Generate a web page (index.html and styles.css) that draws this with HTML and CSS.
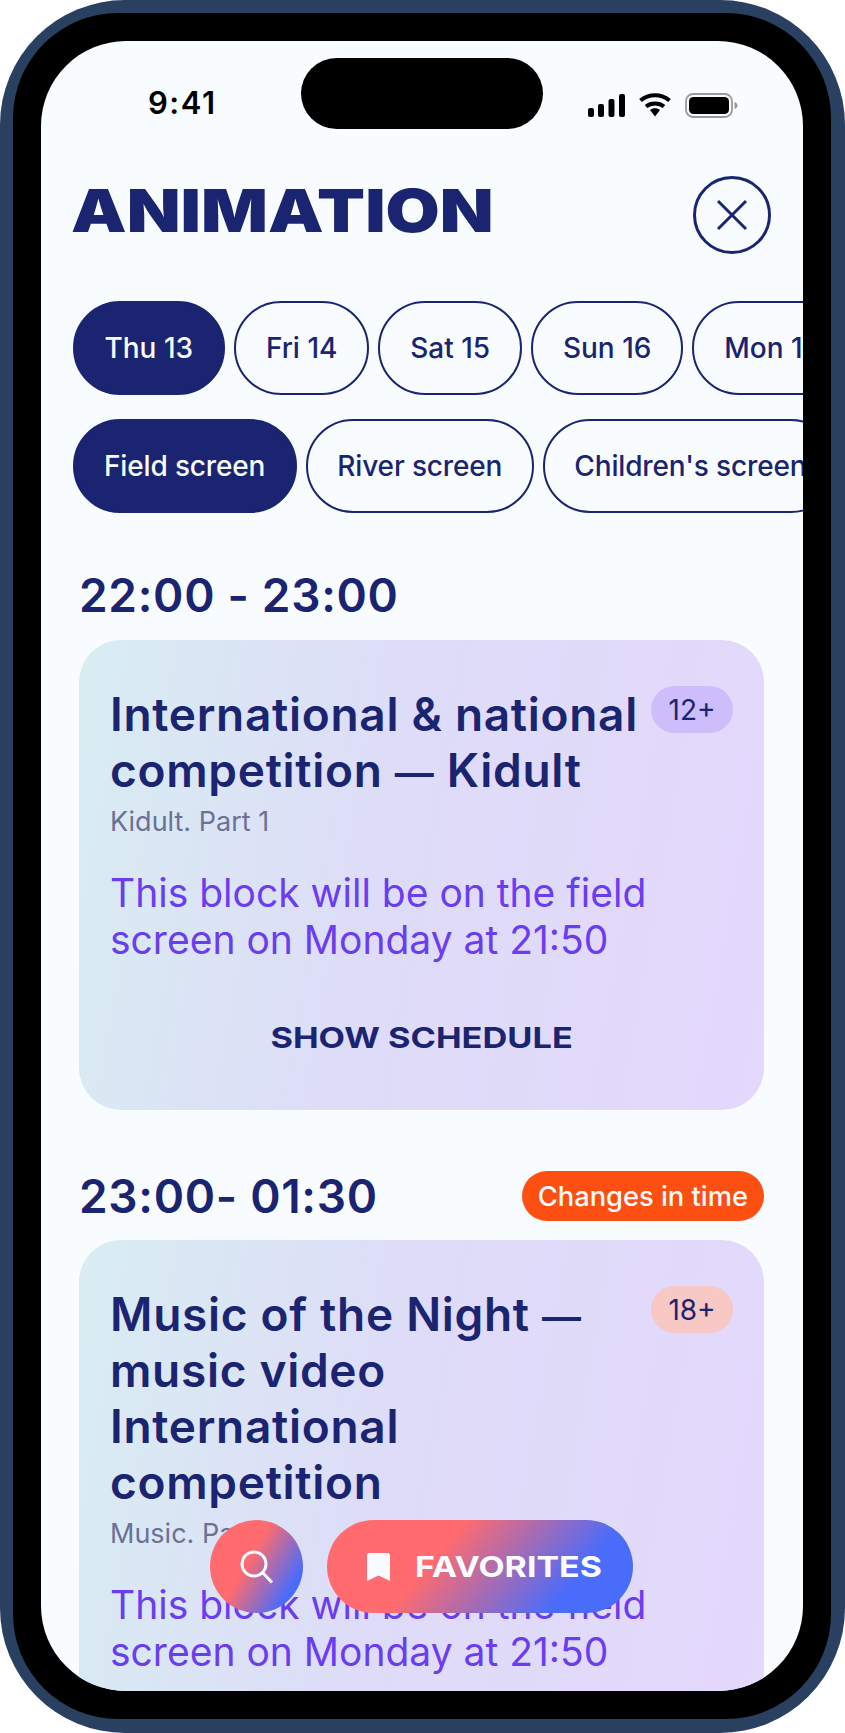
FILE: index.html
```html
<!DOCTYPE html>
<html lang="en">
<head>
    <meta charset="UTF-8">
    <meta name="viewport" content="width=device-width, initial-scale=1.0">
    <title>Animation schedule</title>
    <link rel="stylesheet" href="styles.css">
</head>
<body>

    <div class="phone">
        <div class="bezel">
            <div class="screen">

                <!-- Status bar -->
                <div class="status-bar">
                    <div class="status-time">9:41</div>
                    <div class="island"></div>
                    <div class="status-icons">
                        <svg width="37" height="23" viewBox="0 0 37 23" fill="#000">
                            <rect x="0" y="14" width="6" height="9" rx="2"/>
                            <rect x="10" y="10" width="6" height="13" rx="2"/>
                            <rect x="20.500" y="5" width="6" height="18" rx="2"/>
                            <rect x="31" y="0" width="6" height="23" rx="2"/>
                        </svg>
                        <svg width="32" height="24" viewBox="0 0 32 24" fill="none" stroke="#000" stroke-width="4">
                            <path d="M1.500 7.500C9.500 0.500 22.500 0.500 30.500 7.500"/>
                            <path d="M7 13.500C12 9.500 20 9.500 25 13.500"/>
                            <path d="M11 17L16 23.500L21 17C18 14.800 14 14.800 11 17Z" fill="#000" stroke="none"/>
                        </svg>
                        <svg width="53" height="25" viewBox="0 0 53 25">
                            <rect x="1" y="1" width="46" height="23" rx="7" fill="none" stroke="#9a9a9a" stroke-width="1.800"/>
                            <rect x="4" y="4" width="40" height="17" rx="4.500" fill="#000"/>
                            <path d="M49.500 9C51.500 9.500 52.500 11 52.500 12.500C52.500 14 51.500 15.500 49.500 16Z" fill="#9a9a9a"/>
                        </svg>
                    </div>
                </div>

                <!-- Header -->
                <div class="page-head">
                    <h1 class="page-title"><span>ANIMATION</span></h1>
                    <button class="close-button">
                        <svg width="32" height="32" viewBox="0 0 32 32" fill="none" stroke="#1b2470" stroke-width="3">
                            <path d="M2 2L30 30M30 2L2 30"/>
                        </svg>
                    </button>
                </div>

                <!-- Day filter -->
                <div class="pill-row">
                    <div class="pill active">Thu 13</div>
                    <div class="pill">Fri 14</div>
                    <div class="pill">Sat 15</div>
                    <div class="pill">Sun 16</div>
                    <div class="pill">Mon 17</div>
                </div>

                <!-- Screen filter -->
                <div class="pill-row second">
                    <div class="pill active">Field screen</div>
                    <div class="pill">River screen</div>
                    <div class="pill">Children's screen</div>
                </div>

                <!-- First block -->
                <div class="time-row first">
                    <h2 class="time">22:00 - 23:00</h2>
                </div>
                <div class="card">
                    <div class="card-top">
                        <div class="card-title">International &amp; national competition <span class="dash">—</span> Kidult</div>
                        <div class="age age-12">12+</div>
                    </div>
                    <div class="card-sub">Kidult. Part 1</div>
                    <div class="card-note">This block will be on the field screen on Monday at 21:50</div>
                    <div class="card-link"><span>SHOW SCHEDULE</span></div>
                </div>

                <!-- Second block -->
                <div class="time-row">
                    <h2 class="time">23:00- 01:30</h2>
                    <div class="change-badge">Changes in time</div>
                </div>
                <div class="card">
                    <div class="card-top">
                        <div class="card-title">Music of the Night <span class="dash">—</span> music video International competition</div>
                        <div class="age age-18">18+</div>
                    </div>
                    <div class="card-sub">Music. Part 1</div>
                    <div class="card-note">This block will be on the field screen on Monday at 21:50</div>
                </div>

                <!-- Floating buttons -->
                <div class="float-bar">
                    <button class="float-search">
                        <svg width="34" height="34" viewBox="0 0 34 34" fill="none" stroke="#f7fbff" stroke-width="3">
                            <circle cx="14" cy="14" r="12"/>
                            <path d="M22.500 22.500L32 32.500"/>
                        </svg>
                    </button>
                    <button class="float-fav">
                        <svg width="23" height="28" viewBox="0 0 23 28" fill="#f7fbff">
                            <path d="M2 0H21C22 0 23 1 23 2V28L11.500 22.500L0 28V2C0 1 1 0 2 0Z"/>
                        </svg>
                        <span>FAVORITES</span>
                    </button>
                </div>

            </div>
        </div>
    </div>

</body>
</html>
```

FILE: styles.css
```css
body {
    font-family: Inter, "Noto Sans", sans-serif;
    background-color: #fff;
    margin: 0;
}

.phone {
    width: 845px;
    height: 1733px;
    box-sizing: border-box;
    padding: 13px 14px 14px 13px;
    background-color: #2a4060;
    border-radius: 125px;
}

.bezel {
    height: 100%;
    box-sizing: border-box;
    padding: 28px;
    background-color: #000;
    border-radius: 105px;
}

.screen {
    position: relative;
    height: 100%;
    overflow: hidden;
    background-color: #f8fcff;
    border-radius: 85px;
}

.status-bar {
    display: flex;
    padding: 17px 65px 0 107px;
}

.status-time {
    width: 153px;
    padding-top: 27px;
    font-size: 31px;
    font-weight: 600;
    letter-spacing: 1.500px;
    line-height: 36px;
    color: #000;
}

.island {
    width: 242px;
    height: 71px;
    background-color: #000;
    border-radius: 36px;
}

.status-icons {
    display: flex;
    gap: 14px;
    align-items: center;
    height: 24px;
    margin-left: auto;
    padding-top: 35px;
}

.page-head {
    display: flex;
    justify-content: space-between;
    align-items: flex-start;
    margin-top: 47px;
    padding: 0 32px 0 30px;
}

.page-title {
    margin: 10px 0 0;
    font-size: 59px;
    font-weight: 900;
    line-height: 50px;
    color: #1b2470;
}

.page-title span {
    display: inline-block;
    transform: scaleX(1.187);
    transform-origin: left;
}

.close-button {
    display: flex;
    justify-content: center;
    align-items: center;
    width: 78px;
    height: 78px;
    padding: 0;
    background: none;
    border: 3px solid #1b2470;
    border-radius: 50%;
}

.pill-row {
    display: flex;
    gap: 8.800px;
    margin-top: 47px;
    padding-left: 31.500px;
    overflow: hidden;
}

.pill-row.second {
    gap: 9px;
    margin-top: 24px;
    letter-spacing: -0.150px;
}

.pill {
    display: flex;
    flex-shrink: 0;
    align-items: center;
    box-sizing: border-box;
    height: 94px;
    padding: 0 30px;
    font-size: 28px;
    font-weight: 500;
    color: #1b2470;
    border: 2px solid #1b2470;
    border-radius: 47px;
}

.pill-row.second .pill {
    padding: 0 29.500px;
}

.pill.active {
    background-color: #1b2470;
    color: #f8fcff;
}

.time-row {
    display: flex;
    justify-content: space-between;
    align-items: center;
    height: 50px;
    margin: 61px 39px 19px 38px;
}

.time-row.first {
    margin-top: 57px;
    margin-bottom: 20px;
}

.time {
    margin: 0;
    font-size: 46px;
    font-weight: 600;
    letter-spacing: 0.700px;
    color: #1b2470;
}

.change-badge {
    display: flex;
    align-items: center;
    height: 50px;
    padding: 0 16px;
    font-size: 27.300px;
    font-weight: 500;
    color: #f8fcff;
    background-color: #fe4f12;
    border-radius: 25px;
}

.card {
    box-sizing: border-box;
    margin: 0 39px 0 38px;
    padding: 46px 31px 54px 31px;
    background: linear-gradient(100deg, #d8edf2 0%, #dedcf8 45%, #e4d8fc 100%);
    border-radius: 42px;
}

.card-top {
    display: flex;
    align-items: flex-start;
    justify-content: space-between;
}

.card-title {
    flex: 1;
    font-size: 46px;
    font-weight: 600;
    letter-spacing: 0.700px;
    line-height: 56px;
    color: #1b2470;
}

.dash {
    font-size: 39px;
    line-height: 39px;
}

.age {
    flex-shrink: 0;
    display: flex;
    justify-content: center;
    align-items: center;
    width: 82px;
    height: 47px;
    font-size: 28px;
    color: #1b2470;
    border-radius: 24px;
}

.age-12 {
    background-color: #cdbdfb;
}

.age-18 {
    background-color: #f7c8c4;
}

.card-sub {
    margin-top: 6px;
    font-size: 27px;
    line-height: 36px;
    color: #6b7194;
}

.card-note {
    margin-top: 29px;
    font-size: 39px;
    line-height: 47px;
    color: #6b3df0;
}

.card-link {
    margin-top: 57px;
    font-size: 29px;
    font-weight: 700;
    line-height: 36px;
    text-align: center;
    color: #1b2470;
}

.card-link span {
    display: inline-block;
    transform: scaleX(1.185);
}

.float-bar {
    position: absolute;
    left: 169px;
    top: 1479px;
    display: flex;
    gap: 24px;
}

.float-search,
.float-fav {
    display: flex;
    align-items: center;
    height: 93px;
    padding: 0;
    border: none;
    border-radius: 47px;
    background: linear-gradient(120deg, #ff6b6e 42%, #4a6cfb 82%);
}

.float-search {
    justify-content: center;
    width: 93px;
}

.float-fav {
    width: 306px;
    padding-left: 40px;
    box-sizing: border-box;
    background: linear-gradient(130deg, #ff6b6e 36%, #4a6cfb 78%);
}

.float-fav span {
    display: inline-block;
    margin-left: 25px;
    font-family: Inter, sans-serif;
    font-size: 29px;
    font-weight: 700;
    color: #f8fcff;
    transform: scaleX(1.17);
    transform-origin: left;
}
```
